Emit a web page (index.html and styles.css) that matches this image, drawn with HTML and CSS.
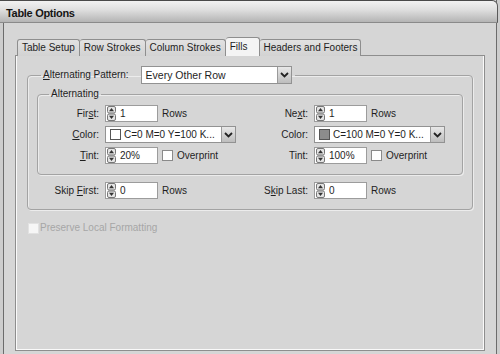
FILE: index.html
```html
<!DOCTYPE html>
<html lang="en">
<head>
    <meta charset="UTF-8">
    <title>Table Options</title>
    <link rel="stylesheet" href="styles.css">
</head>
<body>
    <svg class="defs" width="0" height="0">
        <defs>
            <symbol id="spin" viewBox="0 0 9 15">
                <rect x="0.5" y="0.5" width="8" height="6.5" rx="1.5" fill="#e4e4e4" stroke="#777"/>
                <rect x="0.5" y="8" width="8" height="6.5" rx="1.5" fill="#e4e4e4" stroke="#777"/>
                <path d="M4.5 2 L7 5.2 H2 Z" fill="#333"/>
                <path d="M2 9.8 H7 L4.5 13 Z" fill="#333"/>
            </symbol>
            <symbol id="chevron" viewBox="0 0 9 6">
                <path d="M1 1 L4.5 4.5 L8 1" fill="none" stroke="#222" stroke-width="1.8"/>
            </symbol>
        </defs>
    </svg>

    <div class="window">
        <div class="titlebar">Table Options</div>
        <div class="frame">
            <div class="tabs">
                <div class="tab">Table Setup</div>
                <div class="tab">Row Strokes</div>
                <div class="tab">Column Strokes</div>
                <div class="tab active">Fills</div>
                <div class="tab last">Headers and Footers</div>
            </div>

            <div class="panel">
                <fieldset class="group outer">
                    <legend class="pattern-legend">
                        <span><u>A</u>lternating Pattern:</span>
                        <div class="select pattern">
                            <span class="value">Every Other Row</span>
                            <span class="drop"><svg width="9" height="6"><use href="#chevron"/></svg></span>
                        </div>
                    </legend>

                    <fieldset class="group inner">
                        <legend>Alternating</legend>
                        <div class="grid">
                            <span class="lbl">Fir<u>s</u>t:</span>
                            <div class="ctl">
                                <div class="spinner"><svg width="9" height="15"><use href="#spin"/></svg><span>1</span></div>
                                <span>Rows</span>
                            </div>
                            <span class="lbl">Ne<u>x</u>t:</span>
                            <div class="ctl">
                                <div class="spinner"><svg width="9" height="15"><use href="#spin"/></svg><span>1</span></div>
                                <span>Rows</span>
                            </div>

                            <span class="lbl"><u>C</u>olor:</span>
                            <div class="ctl">
                                <div class="select color">
                                    <span class="swatch"></span>
                                    <span class="value">C=0 M=0 Y=100 K...</span>
                                    <span class="drop"><svg width="9" height="6"><use href="#chevron"/></svg></span>
                                </div>
                            </div>
                            <span class="lbl">Color:</span>
                            <div class="ctl">
                                <div class="select color">
                                    <span class="swatch cyan"></span>
                                    <span class="value">C=100 M=0 Y=0 K...</span>
                                    <span class="drop"><svg width="9" height="6"><use href="#chevron"/></svg></span>
                                </div>
                            </div>

                            <span class="lbl"><u>T</u>int:</span>
                            <div class="ctl">
                                <div class="spinner"><svg width="9" height="15"><use href="#spin"/></svg><span>20%</span></div>
                                <span class="check"></span><span>Overprint</span>
                            </div>
                            <span class="lbl">Tint:</span>
                            <div class="ctl">
                                <div class="spinner"><svg width="9" height="15"><use href="#spin"/></svg><span>100%</span></div>
                                <span class="check"></span><span>Overprint</span>
                            </div>
                        </div>
                    </fieldset>

                    <div class="grid skip">
                        <span class="lbl">Skip <u>F</u>irst:</span>
                        <div class="ctl">
                            <div class="spinner"><svg width="9" height="15"><use href="#spin"/></svg><span>0</span></div>
                            <span>Rows</span>
                        </div>
                        <span class="lbl">S<u>k</u>ip Last:</span>
                        <div class="ctl">
                            <div class="spinner"><svg width="9" height="15"><use href="#spin"/></svg><span>0</span></div>
                            <span>Rows</span>
                        </div>
                    </div>
                </fieldset>

                <div class="preserve">
                    <span class="check disabled"></span>
                    <span>Preserve Local Formatting</span>
                </div>
            </div>
        </div>
    </div>
</body>
</html>
```

FILE: styles.css
```css
body {
    margin: 0;
    background: #d6d6d6;
    font-family: "Liberation Sans", Arial, sans-serif;
    font-size: 10px;
    color: #1e1e1e;
}
.defs {
    position: absolute;
}
.window {
    width: 500px;
    height: 354px;
    background: #d6d6d6;
    box-shadow: inset 3px 0 #cdcdcd, inset 4px 0 #6c6c6c,
                inset -3px 0 #cdcdcd, inset -4px 0 #6c6c6c;
    overflow: hidden;
}
.titlebar {
    height: 21px;
    margin-right: 2px;
    padding-left: 6px;
    border-top: 1px solid #4a4a4a;
    border-right: 1px solid #5a5a5a;
    border-bottom: 1px solid #8a8a8a;
    border-top-right-radius: 6px;
    background: linear-gradient(#f2f2f2, #e0e0e0 40%, #b4b4b4);
    font-size: 11px;
    font-weight: bold;
    line-height: 24px;
    letter-spacing: -0.3px;
    color: #151515;
}
.frame {
    padding: 14px 15px 0 15px;
}
.tabs {
    display: flex;
    align-items: flex-end;
    height: 19px;
    padding-left: 2px;
    margin-bottom: -1px;
    position: relative;
}
.tab {
    height: 16px;
    padding: 0 4px;
    border: 1px solid #8e8e8e;
    border-bottom: none;
    border-radius: 3px 3px 0 0;
    background: linear-gradient(#e2e2e2, #d2d2d2);
    line-height: 16px;
    white-space: nowrap;
}
.tab + .tab {
    border-left: none;
}
.tab.active {
    height: 18px;
    padding: 0 12px 0 4px;
    background: #f4f4f4;
    line-height: 17px;
}
.tab.last {
    padding: 0 3px;
}
.panel {
    height: 294px;
    border: 1px solid #8e8e8e;
    box-shadow: inset 1px -1px 0 #fafafa, inset -1px 0 0 #fafafa;
    background: #d6d6d6;
}
.group {
    margin: 0;
    padding: 0;
    border: 1px solid #a3a3a3;
    border-radius: 4px;
    box-shadow: 1px 1px 0 #ececec, inset 1px 1px 0 #ececec;
    min-inline-size: 0;
}
.group legend {
    line-height: 12px;
}
.outer {
    margin: 10px 11px 0;
    padding-bottom: 10px;
}
.pattern-legend {
    display: flex;
    align-items: center;
    gap: 12px;
    margin-left: 13px;
    padding: 0 3px 0 2px;
}
.inner {
    margin: 4px 9px 0;
    padding: 5px 0 10px;
}
.inner legend {
    margin-left: 11px;
    padding: 0 2px;
}
.grid {
    display: grid;
    grid-template-columns: 61px 138px 59px 1fr;
    column-gap: 6px;
    row-gap: 4px;
}
.grid.skip {
    margin: 7px 0 0 10px;
}
.lbl {
    text-align: right;
    line-height: 17px;
    white-space: nowrap;
}
.ctl {
    display: flex;
    align-items: center;
    gap: 4px;
    height: 17px;
}
.spinner {
    display: flex;
    align-items: center;
    gap: 4px;
    width: 49px;
    height: 15px;
    padding: 0 1px;
    border: 1px solid #9c9c9c;
    background: #fff;
    flex-shrink: 0;
}
.select {
    display: flex;
    align-items: center;
    height: 15px;
    border: 1px solid #929292;
    background: #fff;
    flex-shrink: 0;
}
.select .value {
    flex: 1;
    white-space: nowrap;
    overflow: hidden;
}
.pattern {
    width: 149px;
    height: 16px;
    font-size: 10.5px;
}
.pattern .value {
    padding-left: 4px;
}
.color {
    width: 129px;
}
.drop {
    display: flex;
    align-items: center;
    justify-content: center;
    width: 13px;
    height: 100%;
    border-left: 1px solid #9a9a9a;
    background: linear-gradient(#e8e8e8, #bdbdbd);
}
.swatch {
    width: 9px;
    height: 9px;
    margin: 0 3px 0 4px;
    border: 1px solid #555;
    background: #fff;
    flex-shrink: 0;
}
.swatch.cyan {
    background: #8c8c8c;
}
.check {
    width: 9px;
    height: 9px;
    border: 1px solid #8a8a8a;
    background: #fff;
    flex-shrink: 0;
}
.preserve {
    display: flex;
    align-items: center;
    gap: 1px;
    margin: 12px 0 0 12px;
    color: #a6a6a6;
    line-height: 12px;
}
.check.disabled {
    border-color: #e2e2e2;
    background: #f6f6f6;
}
```
